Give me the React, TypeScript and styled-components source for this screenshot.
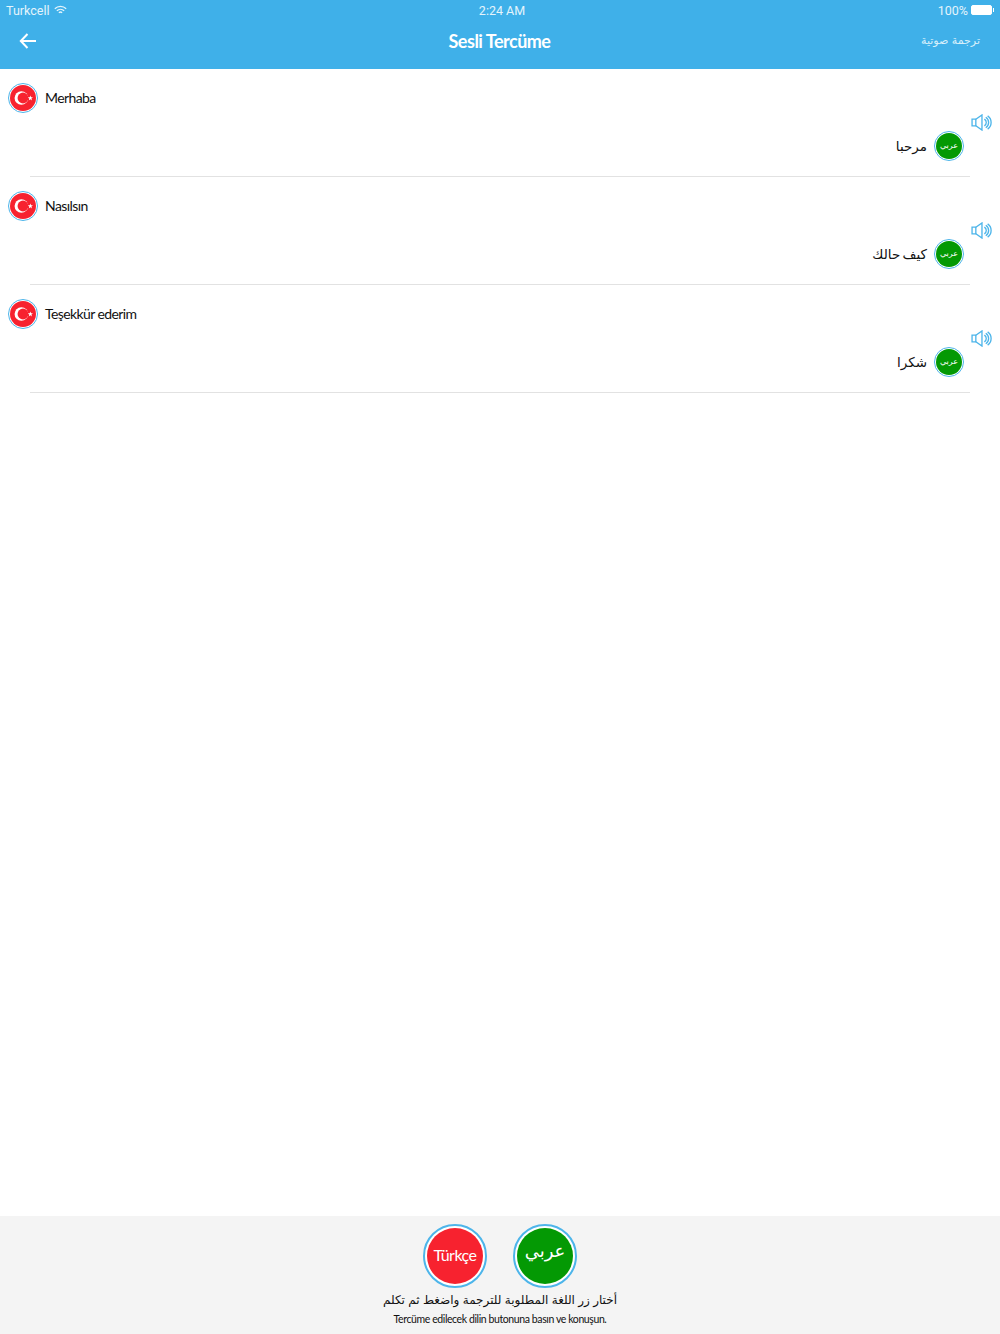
import React from "react";
import styled, { createGlobalStyle } from "styled-components";

const latin = "Lato, sans-serif";
const arabic = '"DejaVu Sans", sans-serif';

const GlobalStyle = createGlobalStyle`
  html, body { margin: 0; padding: 0; background: #fff; }
  body { font-family: ${latin}; }
`;

const Page = styled.div`
  width: 1000px;
  height: 1334px;
  display: flex;
  flex-direction: column;
  overflow: hidden;
`;

const Header = styled.header`
  height: 69px;
  flex: none;
  background: #3fb0e9;
  color: #fff;
  display: flex;
  flex-direction: column;
`;

const StatusBar = styled.div`
  height: 20px;
  padding: 0 5px 0 6px;
  display: grid;
  grid-template-columns: 1fr auto 1fr;
  align-items: center;
  font-family: Roboto, sans-serif;
  font-size: 12.5px;
  color: #e4f4fc;
`;

const StatusLeft = styled.div`
  display: flex;
  align-items: center;
  gap: 5px;
`;

const StatusTime = styled.span`
  margin-left: 3px;
`;

const StatusRight = styled.div`
  display: flex;
  align-items: center;
  justify-content: flex-end;
  gap: 3px;
`;

const Battery = styled.div`
  position: relative;
  width: 19px;
  height: 8px;
  border: 1px solid #fff;
  border-radius: 2px;
  background: #fff;
  margin-right: 3px;

  &::after {
    content: "";
    position: absolute;
    right: -3px;
    top: 2px;
    width: 1px;
    height: 4px;
    background: #fff;
  }
`;

const NavBar = styled.nav`
  flex: 1;
  display: grid;
  grid-template-columns: 1fr auto 1fr;
  align-items: center;
  padding: 0 20px 8px 19px;
`;

const Title = styled.h1`
  margin: 0;
  font-family: ${latin};
  font-size: 18px;
  font-weight: 700;
  letter-spacing: -0.5px;
`;

const NavAction = styled.div`
  justify-self: end;
  font-family: ${arabic};
  font-size: 11px;
  color: #d6effb;
`;

const BackButton = styled.div`
  display: flex;
`;

const List = styled.main`
  flex: 1;
`;

const Row = styled.section`
  height: 108px;
  box-sizing: border-box;
  margin: 0 30px;
  border-bottom: 1px solid #e2e2e2;
  display: flex;
  flex-direction: column;
`;

const SourceLine = styled.div`
  height: 58px;
  margin-left: -22px;
  display: flex;
  align-items: center;
  gap: 7px;
`;

const SourceText = styled.span`
  font-size: 14px;
  letter-spacing: -0.6px;
  padding-bottom: 1px;
  color: #111;
`;

const SpeakerSlot = styled.div`
  height: 0;
  margin-right: -22px;
  display: flex;
  justify-content: flex-end;
  position: relative;
  top: -13px;
`;

const TargetLine = styled.div`
  height: 34px;
  margin-top: 2px;
  margin-right: 6px;
  display: flex;
  align-items: center;
  justify-content: flex-end;
  gap: 7px;
`;

const TargetText = styled.span`
  font-family: ${arabic};
  font-size: 13.5px;
  word-spacing: -2px;
  color: #111;
`;

const Badge = styled.div<{ $size: number; $fill: string; $ring: number }>`
  width: ${(p) => p.$size}px;
  height: ${(p) => p.$size}px;
  box-sizing: border-box;
  flex: none;
  border-radius: 50%;
  border: ${(p) => p.$ring}px solid #4db5ea;
  padding: ${(p) => p.$ring}px;
  background: #fff;
  display: flex;

  & > * {
    flex: 1;
    border-radius: 50%;
    background: ${(p) => p.$fill};
    color: #fff;
    display: flex;
    align-items: center;
    justify-content: center;
    overflow: hidden;
  }
`;

const SmallArabic = styled.span`
  font-family: ${arabic};
  font-size: 8px;
  padding-bottom: 2px;
`;

const Footer = styled.footer`
  height: 118px;
  flex: none;
  box-sizing: border-box;
  padding-top: 8px;
  background: #f4f4f4;
  display: flex;
  flex-direction: column;
  align-items: center;
`;

const Buttons = styled.div`
  display: flex;
  gap: 26px;
`;

const BigLabel = styled.span<{ $arabic?: boolean }>`
  font-family: ${(p) => (p.$arabic ? arabic : latin)};
  font-size: ${(p) => (p.$arabic ? 18 : 16)}px;
  letter-spacing: ${(p) => (p.$arabic ? 0 : -0.5)}px;
  padding-bottom: ${(p) => (p.$arabic ? 12 : 4)}px;
`;

const HintArabic = styled.div`
  margin-top: 2px;
  font-family: ${arabic};
  font-size: 12px;
  word-spacing: -0.5px;
  line-height: 20px;
  color: #111;
`;

const HintTurkish = styled.div`
  margin-top: 1px;
  font-size: 10.5px;
  letter-spacing: -0.4px;
  line-height: 16px;
  color: #111;
`;

const TurkishFlag = () => (
  <svg viewBox="0 0 24 24" width="26" height="26">
    <circle cx="10.5" cy="12" r="6.3" fill="#fff" />
    <circle cx="12" cy="12" r="5" fill="#f7222f" />
    <polygon
      fill="#fff"
      points="18.8,9.6 19.4,11.3 21.2,11.3 19.8,12.4 20.3,14.2 18.8,13.1 17.3,14.2 17.8,12.4 16.4,11.3 18.2,11.3"
    />
  </svg>
);

const SpeakerIcon = () => (
  <svg viewBox="0 0 22 18" width="21" height="17" fill="none" stroke="#4db5ea" strokeWidth="1.4">
    <path d="M1 5.5h4v7H1z" />
    <path d="M5 5.5 11.5 1v16L5 12.5" />
    <path d="M14 5.5a4 4 0 0 1 0 7" />
    <path d="M15.5 3.5a6.5 6.5 0 0 1 0 11" />
    <path d="M17.5 2a8.5 8.5 0 0 1 0 14" />
  </svg>
);

const phrases = [
  { source: "Merhaba", target: "مرحبا" },
  { source: "Nasılsın", target: "كيف حالك" },
  { source: "Teşekkür ederim", target: "شكرا" },
];

export default function App() {
  return (
    <Page>
      <GlobalStyle />
      <Header>
        <StatusBar>
          <StatusLeft>
            Turkcell
            <svg viewBox="0 0 16 12" width="13" height="10" fill="none" stroke="#e4f4fc" strokeWidth="1.6">
              <path d="M1 4.5a10 10 0 0 1 14 0" />
              <path d="M3.5 7a6.5 6.5 0 0 1 9 0" />
              <path d="M6 9.3a3 3 0 0 1 4 0" />
            </svg>
          </StatusLeft>
          <StatusTime>2:24 AM</StatusTime>
          <StatusRight>
            100%
            <Battery />
          </StatusRight>
        </StatusBar>
        <NavBar>
          <BackButton>
            <svg viewBox="0 0 18 16" width="18" height="16" fill="none" stroke="#fff" strokeWidth="2">
              <path d="M17 8H2" />
              <path d="M8.5 1 1.8 8l6.7 7" />
            </svg>
          </BackButton>
          <Title>Sesli Tercüme</Title>
          <NavAction dir="rtl">ترجمة صوتية</NavAction>
        </NavBar>
      </Header>

      <List>
        {phrases.map((phrase) => (
          <Row key={phrase.source}>
            <SourceLine>
              <Badge $size={30} $fill="#f7222f" $ring={1}>
                <div>
                  <TurkishFlag />
                </div>
              </Badge>
              <SourceText>{phrase.source}</SourceText>
            </SourceLine>
            <SpeakerSlot>
              <SpeakerIcon />
            </SpeakerSlot>
            <TargetLine>
              <TargetText dir="rtl">{phrase.target}</TargetText>
              <Badge $size={30} $fill="#049904" $ring={1}>
                <div>
                  <SmallArabic>عربي</SmallArabic>
                </div>
              </Badge>
            </TargetLine>
          </Row>
        ))}
      </List>

      <Footer>
        <Buttons>
          <Badge $size={64} $fill="#f7222f" $ring={2}>
            <div>
              <BigLabel>Türkçe</BigLabel>
            </div>
          </Badge>
          <Badge $size={64} $fill="#049904" $ring={2}>
            <div>
              <BigLabel $arabic>عربي</BigLabel>
            </div>
          </Badge>
        </Buttons>
        <HintArabic dir="rtl">أختار زر اللغة المطلوبة للترجمة واضغط ثم تكلم</HintArabic>
        <HintTurkish>Tercüme edilecek dilin butonuna basın ve konuşun.</HintTurkish>
      </Footer>
    </Page>
  );
}
